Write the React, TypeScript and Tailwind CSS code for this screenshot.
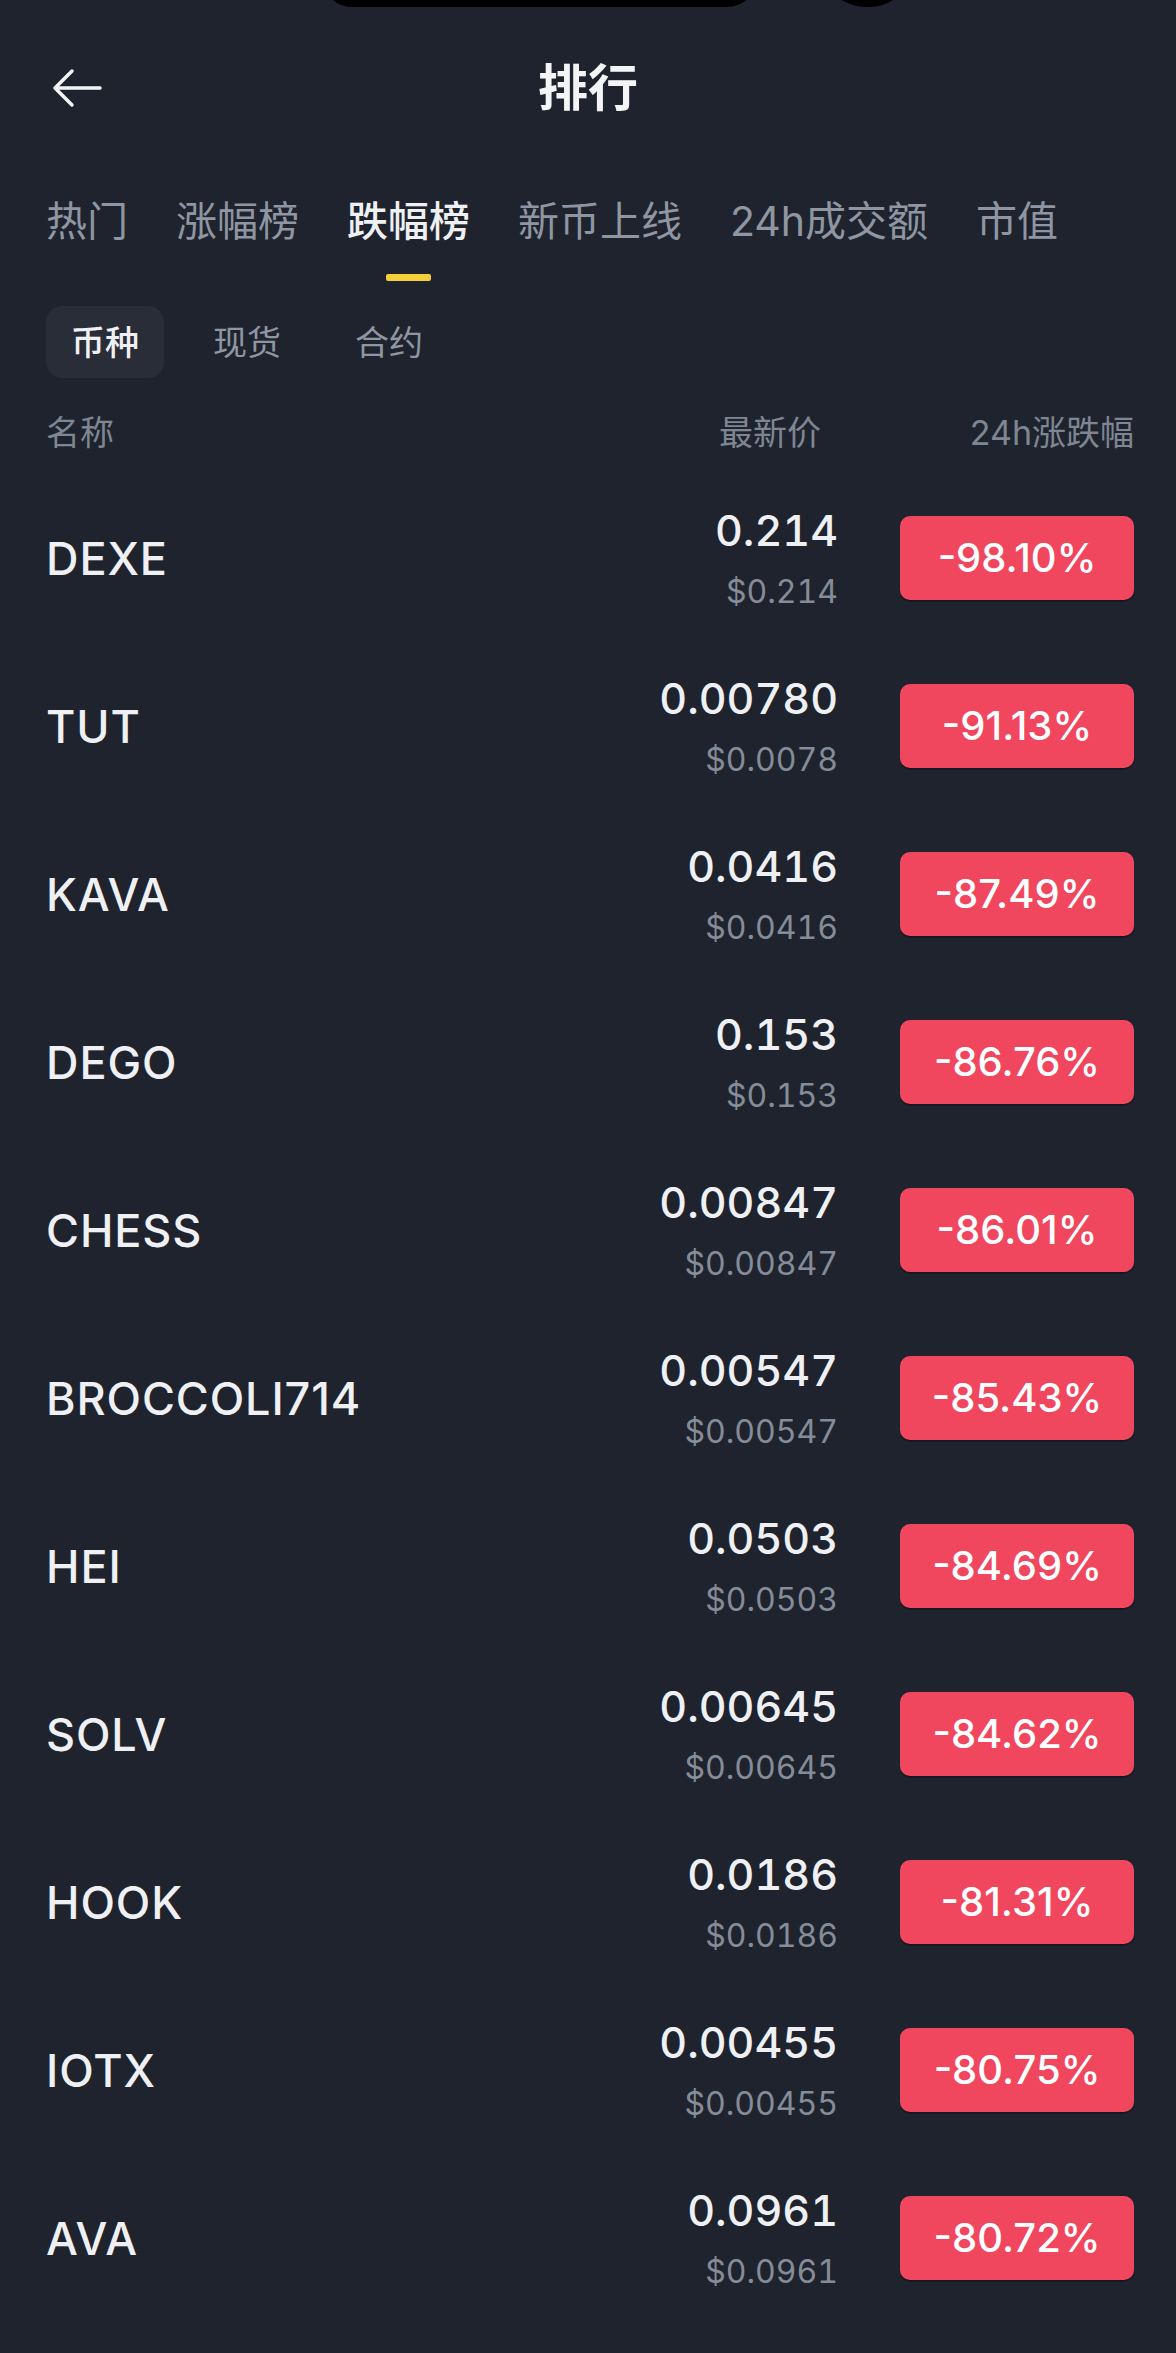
import React from 'react'

const FONT = { fontFamily: 'Inter, "Noto Sans CJK SC", sans-serif' }

const tabs = ['热门', '涨幅榜', '跌幅榜', '新币上线', '24h成交额', '市值']
const subTabs = ['币种', '现货', '合约']

const rows = [
  { name: 'DEXE', price: '0.214', usd: '$0.214', change: '-98.10%' },
  { name: 'TUT', price: '0.00780', usd: '$0.0078', change: '-91.13%' },
  { name: 'KAVA', price: '0.0416', usd: '$0.0416', change: '-87.49%' },
  { name: 'DEGO', price: '0.153', usd: '$0.153', change: '-86.76%' },
  { name: 'CHESS', price: '0.00847', usd: '$0.00847', change: '-86.01%' },
  { name: 'BROCCOLI714', price: '0.00547', usd: '$0.00547', change: '-85.43%' },
  { name: 'HEI', price: '0.0503', usd: '$0.0503', change: '-84.69%' },
  { name: 'SOLV', price: '0.00645', usd: '$0.00645', change: '-84.62%' },
  { name: 'HOOK', price: '0.0186', usd: '$0.0186', change: '-81.31%' },
  { name: 'IOTX', price: '0.00455', usd: '$0.00455', change: '-80.75%' },
  { name: 'AVA', price: '0.0961', usd: '$0.0961', change: '-80.72%' },
]

function BackArrow() {
  return (
    <svg width="60" height="40" viewBox="0 0 60 40" fill="none">
      <path
        d="M9 20H54M9 20L26 3M9 20L26 37"
        stroke="#f3f4f6"
        strokeWidth="3.5"
        strokeLinecap="round"
        strokeLinejoin="round"
      />
    </svg>
  )
}

export default function App() {
  const activeTab = 2
  const activeSub = 0

  return (
    <div className="relative min-h-screen w-full overflow-hidden bg-[#1e232e]" style={FONT}>
      {/* camera cutouts */}
      <div className="absolute -top-[53px] left-[322px] h-[60px] w-[435px] rounded-[30px] bg-black" />
      <div className="absolute -top-[94px] left-[817px] h-[101px] w-[101px] rounded-full bg-black" />

      {/* header */}
      <div className="grid h-[176px] grid-cols-[1fr_auto_1fr] items-center">
        <div className="pl-[46px]">
          <BackArrow />
        </div>
        <h1 className="text-[50px] font-bold leading-none text-[#f3f4f6]">排行</h1>
        <div />
      </div>

      {/* main tabs */}
      <div className="flex gap-[48px] pl-[46px] pt-[17px]">
        {tabs.map((t, i) => (
          <div key={t} className="flex flex-col items-center">
            <span
              className={`h-[56px] whitespace-nowrap text-[41px] leading-[56px] ${
                i === activeTab ? 'font-medium text-[#eef0f3]' : 'text-[#8f96a1]'
              }`}
            >
              {t}
            </span>
            <div
              className={`mt-[25px] h-[7px] w-[45px] rounded-[2px] ${
                i === activeTab ? 'bg-[#f5cf3a]' : 'bg-transparent'
              }`}
            />
          </div>
        ))}
      </div>

      {/* sub tabs */}
      <div className="mt-[25px] flex gap-[24px] pl-[46px]">
        {subTabs.map((t, i) => (
          <div
            key={t}
            className={`flex h-[72px] items-center rounded-[16px] px-[25px] text-[34px] ${
              i === activeSub ? 'bg-[#282d38] font-medium text-[#eef0f3]' : 'text-[#8f96a1]'
            }`}
          >
            {t}
          </div>
        ))}
      </div>

      {/* column headers */}
      <div className="mt-[24px] flex h-[60px] items-center pl-[46px] pr-[42px] text-[34px] text-[#7e8692]">
        <span className="flex-1">名称</span>
        <span className="mr-[79px]">最新价</span>
        <span className="w-[234px] text-right">24h涨跌幅</span>
      </div>

      {/* list */}
      <div className="mt-[12px]">
        {rows.map((r) => (
          <div key={r.name} className="flex h-[168px] items-center pl-[46px] pr-[42px]">
            <span className="flex-1 text-[45px] font-medium leading-none tracking-[0.02em] text-[#eef0f3]">
              {r.name}
            </span>
            <div className="flex flex-col items-end tabular-nums">
              <span className="text-[43px] font-medium leading-[52px] text-[#eef0f3]">{r.price}</span>
              <span className="mt-[16px] text-[32px] leading-[40px] text-[#858c98]">{r.usd}</span>
            </div>
            <div className="ml-[62px] flex h-[84px] w-[234px] items-center justify-center rounded-[10px] bg-[#f0465e] shadow-[0_2px_0_rgba(0,0,0,0.3)]">
              <span className="text-[40px] font-medium text-white">{r.change}</span>
            </div>
          </div>
        ))}
      </div>
    </div>
  )
}
